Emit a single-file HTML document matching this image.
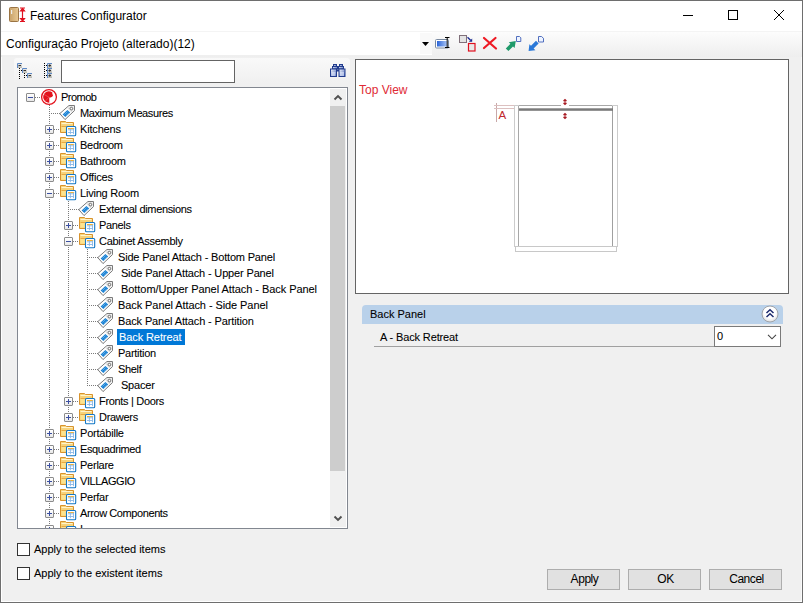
<!DOCTYPE html>
<html><head><meta charset="utf-8"><style>
*{box-sizing:border-box}
html,body{margin:0;padding:0}
body{width:803px;height:603px;overflow:hidden;position:relative;background:#f0f0f0;font-family:"Liberation Sans", sans-serif;color:#000}
.a{position:absolute}
.ic{position:absolute;overflow:visible}
#win{position:absolute;left:0;top:0;width:803px;height:603px;border:1px solid #6e6e6e;box-shadow:inset 1px 0 0 #fff, inset 0 -1px 0 #fff, inset -1px 0 0 #fafafa}
#title{position:absolute;left:1px;top:1px;width:801px;height:30px;background:#fff}
#tbar{position:absolute;left:1px;top:31px;width:801px;height:26px;background:linear-gradient(#fdfdfd,#eeeeee)}
.t12{position:absolute;font-size:12px;line-height:16px;white-space:pre}
.tt{position:absolute;font-size:11px;line-height:16px;white-space:pre;height:16px;-webkit-text-stroke:0.08px currentColor}
.sel{background:#0078d7;color:#fff;padding:0 4px 0 2px;margin-left:-1px}
#tree{position:absolute;left:17px;top:87px;width:331px;height:442px;border:1px solid #828790;background:#fff;overflow:hidden}
#treein{position:absolute;left:-18px;top:-88px;width:803px;height:603px}
.vdot{position:absolute;width:1px;background:repeating-linear-gradient(#7a7a7a 0 1px,transparent 1px 2px)}
.hdot{position:absolute;height:1px;background:repeating-linear-gradient(90deg,#7a7a7a 0 1px,transparent 1px 2px)}
.exp{position:absolute;width:9px;height:9px;border:1px solid #8c8c8c;border-radius:1px;background:linear-gradient(#fff,#e8e8e8)}
.hbar{position:absolute;width:5px;height:1px;background:#3b4fa0;margin-left:0}
.vbar{position:absolute;width:1px;height:5px;background:#3b4fa0}
#sb{position:absolute;left:312px;top:1px;width:16px;height:438px;background:#f0f0f0}
#thumb{position:absolute;left:0;top:17px;width:15px;height:365px;background:#cdcdcd}
.btn{position:absolute;top:569px;width:73px;height:21px;border:1px solid #adadad;background:#e1e1e1;font-size:12px;line-height:19px;text-align:center;padding-left:2px;letter-spacing:-0.45px}
.cb{position:absolute;width:13px;height:13px;border:1px solid #333;background:#fff}
#prev{position:absolute;left:355px;top:59px;width:434px;height:235px;border:1px solid #646464;background:#fff;overflow:hidden}
</style></head><body>
<div id="win"></div>
<div id="title"></div>
<svg class="ic" style="left:9px;top:7px" width="17" height="16" viewBox="0 0 17 16">
<defs><linearGradient id="cg" x1="0" x2="1"><stop offset="0" stop-color="#c9a26a"/><stop offset="1" stop-color="#e8c994"/></linearGradient></defs>
<rect x="0.5" y="0.5" width="9" height="14" rx="1" fill="url(#cg)" stroke="#9a7444"/>
<rect x="2" y="3" width="1.2" height="4" fill="#eee"/>
<path d="M11,1 L16,1 M13.5,1 L13.5,14.5 M11,14.5 L16,14.5 M11.5,4 L13.5,1.5 L15.5,4 Z M11.5,11.5 L13.5,14 L15.5,11.5 Z" stroke="#e0101e" stroke-width="1.2" fill="#e0101e"/>
</svg>
<div class="t12" style="left:30px;top:8px">Features Configurator</div>
<svg class="ic" style="left:683px;top:15px" width="10" height="1"><rect width="10" height="1" fill="#000"/></svg>
<svg class="ic" style="left:728px;top:10px" width="10" height="10"><rect x="0.5" y="0.5" width="9" height="9" fill="none" stroke="#000"/></svg>
<svg class="ic" style="left:774px;top:10px" width="10" height="10"><path d="M0,0 L10,10 M10,0 L0,10" stroke="#000" stroke-width="1"/></svg>
<div id="tbar"></div>
<div class="a" style="left:1px;top:31px;width:801px;height:1px;background:#f4f4f4"></div>
<div class="a" style="left:1px;top:32px;width:431px;height:23px;background:#fff"></div>
<div class="t12" style="left:6px;top:36px">Configuração Projeto (alterado)(12)</div>
<div class="a" style="left:420px;top:33px;width:12px;height:21px;background:#f9f9f9"></div>
<svg class="ic" style="left:422px;top:42px" width="7" height="4"><path d="M0,0 L7,0 L3.5,4 Z" fill="#000"/></svg>

<div class="a" style="left:14px;top:58px;width:336px;height:25px;background:linear-gradient(#f9f9f9,#f0f0f0);border-radius:3px"></div>
<div class="a" style="left:61px;top:60px;width:174px;height:23px;background:#fff;border:1px solid #646464"></div>

<div id="tree"><div id="treein">
<div class="vdot" style="left:49px;top:105px;height:425px"></div>
<div class="vdot" style="left:68px;top:201px;height:217px"></div>
<div class="vdot" style="left:87px;top:249px;height:137px"></div>
<div class="hdot" style="left:35px;top:97px;width:6px"></div>
<div class="exp" style="left:26px;top:93px"></div><div class="hbar" style="left:28px;top:97px"></div>
<svg class="ic" style="left:41px;top:89px" width="17" height="17" viewBox="0 0 17 17">
<circle cx="8" cy="8" r="7.4" fill="#fff" stroke="#e3121c" stroke-width="1.3"/>
<path d="M8.3,13.8 A5.8,5.8 0 0 1 7.6,2.2 L9.8,2.6 L11.4,3.6 L11.3,5 L12.1,6.2 L11.2,7.7 L9.6,8.5 L8.3,8.4 Z" fill="#e3121c"/>
<path d="M8,8.2 L3,5.4 M8,8.2 L4.5,11.9" stroke="#f07a80" stroke-width="0.5"/>
</svg>
<div class="tt" style="left:61px;top:89px;letter-spacing:-0.51px">Promob</div>
<div class="hdot" style="left:49px;top:113px;width:11px"></div>
<svg class="ic" style="left:58px;top:104px" width="18" height="18" viewBox="0 0 18 18">
<path d="M1.8,9.6 L11,1.5 L16.5,1.5 L16.5,6.6 L7,15.6 Z" fill="#fff" stroke="#7a7a7a" stroke-width="1" stroke-linejoin="round"/>
<path d="M11.4,2.3 L15.7,2.3 L15.7,6.3 L13.4,8.4 L9.6,4.2 Z" fill="#e2e2e2"/>
<path d="M4.6,10.4 L9.4,6 L12.2,8.6 L7.4,13 Z" fill="#1a80d2"/>
<path d="M6.3,10.6 L9.6,7.5 M7.8,11.8 L11,8.8" stroke="#7cc0f0" stroke-width="0.7"/>
<circle cx="13.4" cy="4.6" r="1.3" fill="#fff" stroke="#6a6a6a" stroke-width="1"/>
</svg>
<div class="tt" style="left:80px;top:105px;letter-spacing:-0.39px">Maximum Measures</div>
<div class="hdot" style="left:54px;top:129px;width:6px"></div>
<div class="exp" style="left:45px;top:125px"></div><div class="hbar" style="left:47px;top:129px"></div><div class="vbar" style="left:49px;top:127px"></div>
<svg class="ic" style="left:60px;top:121px" width="17" height="17" viewBox="0 0 17 17">
<path d="M0.5,0.5 L5.5,0.5 L6.5,1.5 L13.5,1.5 L13.5,11.5 L0.5,11.5 Z" fill="#f7d37a" stroke="#d8932c" stroke-width="1"/>
<path d="M1.5,2.5 L12.5,2.5" stroke="#fff4cc" stroke-width="1"/>
<path d="M1.5,6 L12.5,6 L12.5,10.5 L1.5,10.5 Z" fill="#fde38e"/>
<path d="M1.5,5.5 L12.5,5.5" stroke="#e6a844" stroke-width="1"/>
<rect x="6.5" y="5.5" width="9.2" height="9.2" rx="1" fill="#fff" stroke="#1478c6" stroke-width="1.1"/>
<path d="M8,7.6 L14.2,7.6" stroke="#f4a818" stroke-width="1"/>
<path d="M8,8.8 L14,8.8 M8,11.5 L14,11.5 M10.4,7.5 L10.4,13.2 M13.5,7.5 L13.5,13.2" stroke="#8ab8e6" stroke-width="0.9"/>
</svg>
<div class="tt" style="left:80px;top:121px;letter-spacing:-0.167px">Kitchens</div>
<div class="hdot" style="left:54px;top:145px;width:6px"></div>
<div class="exp" style="left:45px;top:141px"></div><div class="hbar" style="left:47px;top:145px"></div><div class="vbar" style="left:49px;top:143px"></div>
<svg class="ic" style="left:60px;top:137px" width="17" height="17" viewBox="0 0 17 17">
<path d="M0.5,0.5 L5.5,0.5 L6.5,1.5 L13.5,1.5 L13.5,11.5 L0.5,11.5 Z" fill="#f7d37a" stroke="#d8932c" stroke-width="1"/>
<path d="M1.5,2.5 L12.5,2.5" stroke="#fff4cc" stroke-width="1"/>
<path d="M1.5,6 L12.5,6 L12.5,10.5 L1.5,10.5 Z" fill="#fde38e"/>
<path d="M1.5,5.5 L12.5,5.5" stroke="#e6a844" stroke-width="1"/>
<rect x="6.5" y="5.5" width="9.2" height="9.2" rx="1" fill="#fff" stroke="#1478c6" stroke-width="1.1"/>
<path d="M8,7.6 L14.2,7.6" stroke="#f4a818" stroke-width="1"/>
<path d="M8,8.8 L14,8.8 M8,11.5 L14,11.5 M10.4,7.5 L10.4,13.2 M13.5,7.5 L13.5,13.2" stroke="#8ab8e6" stroke-width="0.9"/>
</svg>
<div class="tt" style="left:80px;top:137px;letter-spacing:-0.277px">Bedroom</div>
<div class="hdot" style="left:54px;top:161px;width:6px"></div>
<div class="exp" style="left:45px;top:157px"></div><div class="hbar" style="left:47px;top:161px"></div><div class="vbar" style="left:49px;top:159px"></div>
<svg class="ic" style="left:60px;top:153px" width="17" height="17" viewBox="0 0 17 17">
<path d="M0.5,0.5 L5.5,0.5 L6.5,1.5 L13.5,1.5 L13.5,11.5 L0.5,11.5 Z" fill="#f7d37a" stroke="#d8932c" stroke-width="1"/>
<path d="M1.5,2.5 L12.5,2.5" stroke="#fff4cc" stroke-width="1"/>
<path d="M1.5,6 L12.5,6 L12.5,10.5 L1.5,10.5 Z" fill="#fde38e"/>
<path d="M1.5,5.5 L12.5,5.5" stroke="#e6a844" stroke-width="1"/>
<rect x="6.5" y="5.5" width="9.2" height="9.2" rx="1" fill="#fff" stroke="#1478c6" stroke-width="1.1"/>
<path d="M8,7.6 L14.2,7.6" stroke="#f4a818" stroke-width="1"/>
<path d="M8,8.8 L14,8.8 M8,11.5 L14,11.5 M10.4,7.5 L10.4,13.2 M13.5,7.5 L13.5,13.2" stroke="#8ab8e6" stroke-width="0.9"/>
</svg>
<div class="tt" style="left:80px;top:153px;letter-spacing:-0.244px">Bathroom</div>
<div class="hdot" style="left:54px;top:177px;width:6px"></div>
<div class="exp" style="left:45px;top:173px"></div><div class="hbar" style="left:47px;top:177px"></div><div class="vbar" style="left:49px;top:175px"></div>
<svg class="ic" style="left:60px;top:169px" width="17" height="17" viewBox="0 0 17 17">
<path d="M0.5,0.5 L5.5,0.5 L6.5,1.5 L13.5,1.5 L13.5,11.5 L0.5,11.5 Z" fill="#f7d37a" stroke="#d8932c" stroke-width="1"/>
<path d="M1.5,2.5 L12.5,2.5" stroke="#fff4cc" stroke-width="1"/>
<path d="M1.5,6 L12.5,6 L12.5,10.5 L1.5,10.5 Z" fill="#fde38e"/>
<path d="M1.5,5.5 L12.5,5.5" stroke="#e6a844" stroke-width="1"/>
<rect x="6.5" y="5.5" width="9.2" height="9.2" rx="1" fill="#fff" stroke="#1478c6" stroke-width="1.1"/>
<path d="M8,7.6 L14.2,7.6" stroke="#f4a818" stroke-width="1"/>
<path d="M8,8.8 L14,8.8 M8,11.5 L14,11.5 M10.4,7.5 L10.4,13.2 M13.5,7.5 L13.5,13.2" stroke="#8ab8e6" stroke-width="0.9"/>
</svg>
<div class="tt" style="left:80px;top:169px;letter-spacing:-0.173px">Offices</div>
<div class="hdot" style="left:54px;top:193px;width:6px"></div>
<div class="exp" style="left:45px;top:189px"></div><div class="hbar" style="left:47px;top:193px"></div>
<svg class="ic" style="left:60px;top:185px" width="17" height="17" viewBox="0 0 17 17">
<path d="M0.5,0.5 L5.5,0.5 L6.5,1.5 L13.5,1.5 L13.5,11.5 L0.5,11.5 Z" fill="#f7d37a" stroke="#d8932c" stroke-width="1"/>
<path d="M1.5,2.5 L12.5,2.5" stroke="#fff4cc" stroke-width="1"/>
<path d="M1.5,6 L12.5,6 L12.5,10.5 L1.5,10.5 Z" fill="#fde38e"/>
<path d="M1.5,5.5 L12.5,5.5" stroke="#e6a844" stroke-width="1"/>
<rect x="6.5" y="5.5" width="9.2" height="9.2" rx="1" fill="#fff" stroke="#1478c6" stroke-width="1.1"/>
<path d="M8,7.6 L14.2,7.6" stroke="#f4a818" stroke-width="1"/>
<path d="M8,8.8 L14,8.8 M8,11.5 L14,11.5 M10.4,7.5 L10.4,13.2 M13.5,7.5 L13.5,13.2" stroke="#8ab8e6" stroke-width="0.9"/>
</svg>
<div class="tt" style="left:80px;top:185px;letter-spacing:-0.21px">Living Room</div>
<div class="hdot" style="left:68px;top:209px;width:11px"></div>
<svg class="ic" style="left:77px;top:200px" width="18" height="18" viewBox="0 0 18 18">
<path d="M1.8,9.6 L11,1.5 L16.5,1.5 L16.5,6.6 L7,15.6 Z" fill="#fff" stroke="#7a7a7a" stroke-width="1" stroke-linejoin="round"/>
<path d="M11.4,2.3 L15.7,2.3 L15.7,6.3 L13.4,8.4 L9.6,4.2 Z" fill="#e2e2e2"/>
<path d="M4.6,10.4 L9.4,6 L12.2,8.6 L7.4,13 Z" fill="#1a80d2"/>
<path d="M6.3,10.6 L9.6,7.5 M7.8,11.8 L11,8.8" stroke="#7cc0f0" stroke-width="0.7"/>
<circle cx="13.4" cy="4.6" r="1.3" fill="#fff" stroke="#6a6a6a" stroke-width="1"/>
</svg>
<div class="tt" style="left:99px;top:201px;letter-spacing:-0.334px">External dimensions</div>
<div class="hdot" style="left:73px;top:225px;width:6px"></div>
<div class="exp" style="left:64px;top:221px"></div><div class="hbar" style="left:66px;top:225px"></div><div class="vbar" style="left:68px;top:223px"></div>
<svg class="ic" style="left:79px;top:217px" width="17" height="17" viewBox="0 0 17 17">
<path d="M0.5,0.5 L5.5,0.5 L6.5,1.5 L13.5,1.5 L13.5,11.5 L0.5,11.5 Z" fill="#f7d37a" stroke="#d8932c" stroke-width="1"/>
<path d="M1.5,2.5 L12.5,2.5" stroke="#fff4cc" stroke-width="1"/>
<path d="M1.5,6 L12.5,6 L12.5,10.5 L1.5,10.5 Z" fill="#fde38e"/>
<path d="M1.5,5.5 L12.5,5.5" stroke="#e6a844" stroke-width="1"/>
<rect x="6.5" y="5.5" width="9.2" height="9.2" rx="1" fill="#fff" stroke="#1478c6" stroke-width="1.1"/>
<path d="M8,7.6 L14.2,7.6" stroke="#f4a818" stroke-width="1"/>
<path d="M8,8.8 L14,8.8 M8,11.5 L14,11.5 M10.4,7.5 L10.4,13.2 M13.5,7.5 L13.5,13.2" stroke="#8ab8e6" stroke-width="0.9"/>
</svg>
<div class="tt" style="left:99px;top:217px;letter-spacing:-0.33px">Panels</div>
<div class="hdot" style="left:73px;top:241px;width:6px"></div>
<div class="exp" style="left:64px;top:237px"></div><div class="hbar" style="left:66px;top:241px"></div>
<svg class="ic" style="left:79px;top:233px" width="17" height="17" viewBox="0 0 17 17">
<path d="M0.5,0.5 L5.5,0.5 L6.5,1.5 L13.5,1.5 L13.5,11.5 L0.5,11.5 Z" fill="#f7d37a" stroke="#d8932c" stroke-width="1"/>
<path d="M1.5,2.5 L12.5,2.5" stroke="#fff4cc" stroke-width="1"/>
<path d="M1.5,6 L12.5,6 L12.5,10.5 L1.5,10.5 Z" fill="#fde38e"/>
<path d="M1.5,5.5 L12.5,5.5" stroke="#e6a844" stroke-width="1"/>
<rect x="6.5" y="5.5" width="9.2" height="9.2" rx="1" fill="#fff" stroke="#1478c6" stroke-width="1.1"/>
<path d="M8,7.6 L14.2,7.6" stroke="#f4a818" stroke-width="1"/>
<path d="M8,8.8 L14,8.8 M8,11.5 L14,11.5 M10.4,7.5 L10.4,13.2 M13.5,7.5 L13.5,13.2" stroke="#8ab8e6" stroke-width="0.9"/>
</svg>
<div class="tt" style="left:99px;top:233px;letter-spacing:-0.273px">Cabinet Assembly</div>
<div class="hdot" style="left:87px;top:257px;width:11px"></div>
<svg class="ic" style="left:96px;top:248px" width="18" height="18" viewBox="0 0 18 18">
<path d="M1.8,9.6 L11,1.5 L16.5,1.5 L16.5,6.6 L7,15.6 Z" fill="#fff" stroke="#7a7a7a" stroke-width="1" stroke-linejoin="round"/>
<path d="M11.4,2.3 L15.7,2.3 L15.7,6.3 L13.4,8.4 L9.6,4.2 Z" fill="#e2e2e2"/>
<path d="M4.6,10.4 L9.4,6 L12.2,8.6 L7.4,13 Z" fill="#1a80d2"/>
<path d="M6.3,10.6 L9.6,7.5 M7.8,11.8 L11,8.8" stroke="#7cc0f0" stroke-width="0.7"/>
<circle cx="13.4" cy="4.6" r="1.3" fill="#fff" stroke="#6a6a6a" stroke-width="1"/>
</svg>
<div class="tt" style="left:118px;top:249px;letter-spacing:-0.178px">Side Panel Attach - Bottom Panel</div>
<div class="hdot" style="left:87px;top:273px;width:11px"></div>
<svg class="ic" style="left:96px;top:264px" width="18" height="18" viewBox="0 0 18 18">
<path d="M1.8,9.6 L11,1.5 L16.5,1.5 L16.5,6.6 L7,15.6 Z" fill="#fff" stroke="#7a7a7a" stroke-width="1" stroke-linejoin="round"/>
<path d="M11.4,2.3 L15.7,2.3 L15.7,6.3 L13.4,8.4 L9.6,4.2 Z" fill="#e2e2e2"/>
<path d="M4.6,10.4 L9.4,6 L12.2,8.6 L7.4,13 Z" fill="#1a80d2"/>
<path d="M6.3,10.6 L9.6,7.5 M7.8,11.8 L11,8.8" stroke="#7cc0f0" stroke-width="0.7"/>
<circle cx="13.4" cy="4.6" r="1.3" fill="#fff" stroke="#6a6a6a" stroke-width="1"/>
</svg>
<div class="tt" style="left:118px;top:265px;letter-spacing:-0.157px"> Side Panel Attach - Upper Panel</div>
<div class="hdot" style="left:87px;top:289px;width:11px"></div>
<svg class="ic" style="left:96px;top:280px" width="18" height="18" viewBox="0 0 18 18">
<path d="M1.8,9.6 L11,1.5 L16.5,1.5 L16.5,6.6 L7,15.6 Z" fill="#fff" stroke="#7a7a7a" stroke-width="1" stroke-linejoin="round"/>
<path d="M11.4,2.3 L15.7,2.3 L15.7,6.3 L13.4,8.4 L9.6,4.2 Z" fill="#e2e2e2"/>
<path d="M4.6,10.4 L9.4,6 L12.2,8.6 L7.4,13 Z" fill="#1a80d2"/>
<path d="M6.3,10.6 L9.6,7.5 M7.8,11.8 L11,8.8" stroke="#7cc0f0" stroke-width="0.7"/>
<circle cx="13.4" cy="4.6" r="1.3" fill="#fff" stroke="#6a6a6a" stroke-width="1"/>
</svg>
<div class="tt" style="left:118px;top:281px;letter-spacing:-0.056px"> Bottom/Upper Panel Attach - Back Panel</div>
<div class="hdot" style="left:87px;top:305px;width:11px"></div>
<svg class="ic" style="left:96px;top:296px" width="18" height="18" viewBox="0 0 18 18">
<path d="M1.8,9.6 L11,1.5 L16.5,1.5 L16.5,6.6 L7,15.6 Z" fill="#fff" stroke="#7a7a7a" stroke-width="1" stroke-linejoin="round"/>
<path d="M11.4,2.3 L15.7,2.3 L15.7,6.3 L13.4,8.4 L9.6,4.2 Z" fill="#e2e2e2"/>
<path d="M4.6,10.4 L9.4,6 L12.2,8.6 L7.4,13 Z" fill="#1a80d2"/>
<path d="M6.3,10.6 L9.6,7.5 M7.8,11.8 L11,8.8" stroke="#7cc0f0" stroke-width="0.7"/>
<circle cx="13.4" cy="4.6" r="1.3" fill="#fff" stroke="#6a6a6a" stroke-width="1"/>
</svg>
<div class="tt" style="left:118px;top:297px;letter-spacing:-0.081px">Back Panel Attach - Side Panel</div>
<div class="hdot" style="left:87px;top:321px;width:11px"></div>
<svg class="ic" style="left:96px;top:312px" width="18" height="18" viewBox="0 0 18 18">
<path d="M1.8,9.6 L11,1.5 L16.5,1.5 L16.5,6.6 L7,15.6 Z" fill="#fff" stroke="#7a7a7a" stroke-width="1" stroke-linejoin="round"/>
<path d="M11.4,2.3 L15.7,2.3 L15.7,6.3 L13.4,8.4 L9.6,4.2 Z" fill="#e2e2e2"/>
<path d="M4.6,10.4 L9.4,6 L12.2,8.6 L7.4,13 Z" fill="#1a80d2"/>
<path d="M6.3,10.6 L9.6,7.5 M7.8,11.8 L11,8.8" stroke="#7cc0f0" stroke-width="0.7"/>
<circle cx="13.4" cy="4.6" r="1.3" fill="#fff" stroke="#6a6a6a" stroke-width="1"/>
</svg>
<div class="tt" style="left:118px;top:313px;letter-spacing:-0.126px">Back Panel Attach - Partition</div>
<div class="hdot" style="left:87px;top:337px;width:11px"></div>
<svg class="ic" style="left:96px;top:328px" width="18" height="18" viewBox="0 0 18 18">
<path d="M1.8,9.6 L11,1.5 L16.5,1.5 L16.5,6.6 L7,15.6 Z" fill="#fff" stroke="#7a7a7a" stroke-width="1" stroke-linejoin="round"/>
<path d="M11.4,2.3 L15.7,2.3 L15.7,6.3 L13.4,8.4 L9.6,4.2 Z" fill="#e2e2e2"/>
<path d="M4.6,10.4 L9.4,6 L12.2,8.6 L7.4,13 Z" fill="#1a80d2"/>
<path d="M6.3,10.6 L9.6,7.5 M7.8,11.8 L11,8.8" stroke="#7cc0f0" stroke-width="0.7"/>
<circle cx="13.4" cy="4.6" r="1.3" fill="#fff" stroke="#6a6a6a" stroke-width="1"/>
</svg>
<div class="tt sel" style="left:118px;top:329px;letter-spacing:-0.099px">Back Retreat</div>
<div class="hdot" style="left:87px;top:353px;width:11px"></div>
<svg class="ic" style="left:96px;top:344px" width="18" height="18" viewBox="0 0 18 18">
<path d="M1.8,9.6 L11,1.5 L16.5,1.5 L16.5,6.6 L7,15.6 Z" fill="#fff" stroke="#7a7a7a" stroke-width="1" stroke-linejoin="round"/>
<path d="M11.4,2.3 L15.7,2.3 L15.7,6.3 L13.4,8.4 L9.6,4.2 Z" fill="#e2e2e2"/>
<path d="M4.6,10.4 L9.4,6 L12.2,8.6 L7.4,13 Z" fill="#1a80d2"/>
<path d="M6.3,10.6 L9.6,7.5 M7.8,11.8 L11,8.8" stroke="#7cc0f0" stroke-width="0.7"/>
<circle cx="13.4" cy="4.6" r="1.3" fill="#fff" stroke="#6a6a6a" stroke-width="1"/>
</svg>
<div class="tt" style="left:118px;top:345px;letter-spacing:-0.282px">Partition</div>
<div class="hdot" style="left:87px;top:369px;width:11px"></div>
<svg class="ic" style="left:96px;top:360px" width="18" height="18" viewBox="0 0 18 18">
<path d="M1.8,9.6 L11,1.5 L16.5,1.5 L16.5,6.6 L7,15.6 Z" fill="#fff" stroke="#7a7a7a" stroke-width="1" stroke-linejoin="round"/>
<path d="M11.4,2.3 L15.7,2.3 L15.7,6.3 L13.4,8.4 L9.6,4.2 Z" fill="#e2e2e2"/>
<path d="M4.6,10.4 L9.4,6 L12.2,8.6 L7.4,13 Z" fill="#1a80d2"/>
<path d="M6.3,10.6 L9.6,7.5 M7.8,11.8 L11,8.8" stroke="#7cc0f0" stroke-width="0.7"/>
<circle cx="13.4" cy="4.6" r="1.3" fill="#fff" stroke="#6a6a6a" stroke-width="1"/>
</svg>
<div class="tt" style="left:118px;top:361px;letter-spacing:-0.32px">Shelf</div>
<div class="hdot" style="left:87px;top:385px;width:11px"></div>
<svg class="ic" style="left:96px;top:376px" width="18" height="18" viewBox="0 0 18 18">
<path d="M1.8,9.6 L11,1.5 L16.5,1.5 L16.5,6.6 L7,15.6 Z" fill="#fff" stroke="#7a7a7a" stroke-width="1" stroke-linejoin="round"/>
<path d="M11.4,2.3 L15.7,2.3 L15.7,6.3 L13.4,8.4 L9.6,4.2 Z" fill="#e2e2e2"/>
<path d="M4.6,10.4 L9.4,6 L12.2,8.6 L7.4,13 Z" fill="#1a80d2"/>
<path d="M6.3,10.6 L9.6,7.5 M7.8,11.8 L11,8.8" stroke="#7cc0f0" stroke-width="0.7"/>
<circle cx="13.4" cy="4.6" r="1.3" fill="#fff" stroke="#6a6a6a" stroke-width="1"/>
</svg>
<div class="tt" style="left:118px;top:377px;letter-spacing:-0.17px"> Spacer</div>
<div class="hdot" style="left:73px;top:401px;width:6px"></div>
<div class="exp" style="left:64px;top:397px"></div><div class="hbar" style="left:66px;top:401px"></div><div class="vbar" style="left:68px;top:399px"></div>
<svg class="ic" style="left:79px;top:393px" width="17" height="17" viewBox="0 0 17 17">
<path d="M0.5,0.5 L5.5,0.5 L6.5,1.5 L13.5,1.5 L13.5,11.5 L0.5,11.5 Z" fill="#f7d37a" stroke="#d8932c" stroke-width="1"/>
<path d="M1.5,2.5 L12.5,2.5" stroke="#fff4cc" stroke-width="1"/>
<path d="M1.5,6 L12.5,6 L12.5,10.5 L1.5,10.5 Z" fill="#fde38e"/>
<path d="M1.5,5.5 L12.5,5.5" stroke="#e6a844" stroke-width="1"/>
<rect x="6.5" y="5.5" width="9.2" height="9.2" rx="1" fill="#fff" stroke="#1478c6" stroke-width="1.1"/>
<path d="M8,7.6 L14.2,7.6" stroke="#f4a818" stroke-width="1"/>
<path d="M8,8.8 L14,8.8 M8,11.5 L14,11.5 M10.4,7.5 L10.4,13.2 M13.5,7.5 L13.5,13.2" stroke="#8ab8e6" stroke-width="0.9"/>
</svg>
<div class="tt" style="left:99px;top:393px;letter-spacing:-0.319px">Fronts | Doors</div>
<div class="hdot" style="left:73px;top:417px;width:6px"></div>
<div class="exp" style="left:64px;top:413px"></div><div class="hbar" style="left:66px;top:417px"></div><div class="vbar" style="left:68px;top:415px"></div>
<svg class="ic" style="left:79px;top:409px" width="17" height="17" viewBox="0 0 17 17">
<path d="M0.5,0.5 L5.5,0.5 L6.5,1.5 L13.5,1.5 L13.5,11.5 L0.5,11.5 Z" fill="#f7d37a" stroke="#d8932c" stroke-width="1"/>
<path d="M1.5,2.5 L12.5,2.5" stroke="#fff4cc" stroke-width="1"/>
<path d="M1.5,6 L12.5,6 L12.5,10.5 L1.5,10.5 Z" fill="#fde38e"/>
<path d="M1.5,5.5 L12.5,5.5" stroke="#e6a844" stroke-width="1"/>
<rect x="6.5" y="5.5" width="9.2" height="9.2" rx="1" fill="#fff" stroke="#1478c6" stroke-width="1.1"/>
<path d="M8,7.6 L14.2,7.6" stroke="#f4a818" stroke-width="1"/>
<path d="M8,8.8 L14,8.8 M8,11.5 L14,11.5 M10.4,7.5 L10.4,13.2 M13.5,7.5 L13.5,13.2" stroke="#8ab8e6" stroke-width="0.9"/>
</svg>
<div class="tt" style="left:99px;top:409px;letter-spacing:-0.293px">Drawers</div>
<div class="hdot" style="left:54px;top:433px;width:6px"></div>
<div class="exp" style="left:45px;top:429px"></div><div class="hbar" style="left:47px;top:433px"></div><div class="vbar" style="left:49px;top:431px"></div>
<svg class="ic" style="left:60px;top:425px" width="17" height="17" viewBox="0 0 17 17">
<path d="M0.5,0.5 L5.5,0.5 L6.5,1.5 L13.5,1.5 L13.5,11.5 L0.5,11.5 Z" fill="#f7d37a" stroke="#d8932c" stroke-width="1"/>
<path d="M1.5,2.5 L12.5,2.5" stroke="#fff4cc" stroke-width="1"/>
<path d="M1.5,6 L12.5,6 L12.5,10.5 L1.5,10.5 Z" fill="#fde38e"/>
<path d="M1.5,5.5 L12.5,5.5" stroke="#e6a844" stroke-width="1"/>
<rect x="6.5" y="5.5" width="9.2" height="9.2" rx="1" fill="#fff" stroke="#1478c6" stroke-width="1.1"/>
<path d="M8,7.6 L14.2,7.6" stroke="#f4a818" stroke-width="1"/>
<path d="M8,8.8 L14,8.8 M8,11.5 L14,11.5 M10.4,7.5 L10.4,13.2 M13.5,7.5 L13.5,13.2" stroke="#8ab8e6" stroke-width="0.9"/>
</svg>
<div class="tt" style="left:80px;top:425px;letter-spacing:-0.208px">Portábille</div>
<div class="hdot" style="left:54px;top:449px;width:6px"></div>
<div class="exp" style="left:45px;top:445px"></div><div class="hbar" style="left:47px;top:449px"></div><div class="vbar" style="left:49px;top:447px"></div>
<svg class="ic" style="left:60px;top:441px" width="17" height="17" viewBox="0 0 17 17">
<path d="M0.5,0.5 L5.5,0.5 L6.5,1.5 L13.5,1.5 L13.5,11.5 L0.5,11.5 Z" fill="#f7d37a" stroke="#d8932c" stroke-width="1"/>
<path d="M1.5,2.5 L12.5,2.5" stroke="#fff4cc" stroke-width="1"/>
<path d="M1.5,6 L12.5,6 L12.5,10.5 L1.5,10.5 Z" fill="#fde38e"/>
<path d="M1.5,5.5 L12.5,5.5" stroke="#e6a844" stroke-width="1"/>
<rect x="6.5" y="5.5" width="9.2" height="9.2" rx="1" fill="#fff" stroke="#1478c6" stroke-width="1.1"/>
<path d="M8,7.6 L14.2,7.6" stroke="#f4a818" stroke-width="1"/>
<path d="M8,8.8 L14,8.8 M8,11.5 L14,11.5 M10.4,7.5 L10.4,13.2 M13.5,7.5 L13.5,13.2" stroke="#8ab8e6" stroke-width="0.9"/>
</svg>
<div class="tt" style="left:80px;top:441px;letter-spacing:-0.36px">Esquadrimed</div>
<div class="hdot" style="left:54px;top:465px;width:6px"></div>
<div class="exp" style="left:45px;top:461px"></div><div class="hbar" style="left:47px;top:465px"></div><div class="vbar" style="left:49px;top:463px"></div>
<svg class="ic" style="left:60px;top:457px" width="17" height="17" viewBox="0 0 17 17">
<path d="M0.5,0.5 L5.5,0.5 L6.5,1.5 L13.5,1.5 L13.5,11.5 L0.5,11.5 Z" fill="#f7d37a" stroke="#d8932c" stroke-width="1"/>
<path d="M1.5,2.5 L12.5,2.5" stroke="#fff4cc" stroke-width="1"/>
<path d="M1.5,6 L12.5,6 L12.5,10.5 L1.5,10.5 Z" fill="#fde38e"/>
<path d="M1.5,5.5 L12.5,5.5" stroke="#e6a844" stroke-width="1"/>
<rect x="6.5" y="5.5" width="9.2" height="9.2" rx="1" fill="#fff" stroke="#1478c6" stroke-width="1.1"/>
<path d="M8,7.6 L14.2,7.6" stroke="#f4a818" stroke-width="1"/>
<path d="M8,8.8 L14,8.8 M8,11.5 L14,11.5 M10.4,7.5 L10.4,13.2 M13.5,7.5 L13.5,13.2" stroke="#8ab8e6" stroke-width="0.9"/>
</svg>
<div class="tt" style="left:80px;top:457px;letter-spacing:-0.247px">Perlare</div>
<div class="hdot" style="left:54px;top:481px;width:6px"></div>
<div class="exp" style="left:45px;top:477px"></div><div class="hbar" style="left:47px;top:481px"></div><div class="vbar" style="left:49px;top:479px"></div>
<svg class="ic" style="left:60px;top:473px" width="17" height="17" viewBox="0 0 17 17">
<path d="M0.5,0.5 L5.5,0.5 L6.5,1.5 L13.5,1.5 L13.5,11.5 L0.5,11.5 Z" fill="#f7d37a" stroke="#d8932c" stroke-width="1"/>
<path d="M1.5,2.5 L12.5,2.5" stroke="#fff4cc" stroke-width="1"/>
<path d="M1.5,6 L12.5,6 L12.5,10.5 L1.5,10.5 Z" fill="#fde38e"/>
<path d="M1.5,5.5 L12.5,5.5" stroke="#e6a844" stroke-width="1"/>
<rect x="6.5" y="5.5" width="9.2" height="9.2" rx="1" fill="#fff" stroke="#1478c6" stroke-width="1.1"/>
<path d="M8,7.6 L14.2,7.6" stroke="#f4a818" stroke-width="1"/>
<path d="M8,8.8 L14,8.8 M8,11.5 L14,11.5 M10.4,7.5 L10.4,13.2 M13.5,7.5 L13.5,13.2" stroke="#8ab8e6" stroke-width="0.9"/>
</svg>
<div class="tt" style="left:80px;top:473px;letter-spacing:-0.412px">VILLAGGIO</div>
<div class="hdot" style="left:54px;top:497px;width:6px"></div>
<div class="exp" style="left:45px;top:493px"></div><div class="hbar" style="left:47px;top:497px"></div><div class="vbar" style="left:49px;top:495px"></div>
<svg class="ic" style="left:60px;top:489px" width="17" height="17" viewBox="0 0 17 17">
<path d="M0.5,0.5 L5.5,0.5 L6.5,1.5 L13.5,1.5 L13.5,11.5 L0.5,11.5 Z" fill="#f7d37a" stroke="#d8932c" stroke-width="1"/>
<path d="M1.5,2.5 L12.5,2.5" stroke="#fff4cc" stroke-width="1"/>
<path d="M1.5,6 L12.5,6 L12.5,10.5 L1.5,10.5 Z" fill="#fde38e"/>
<path d="M1.5,5.5 L12.5,5.5" stroke="#e6a844" stroke-width="1"/>
<rect x="6.5" y="5.5" width="9.2" height="9.2" rx="1" fill="#fff" stroke="#1478c6" stroke-width="1.1"/>
<path d="M8,7.6 L14.2,7.6" stroke="#f4a818" stroke-width="1"/>
<path d="M8,8.8 L14,8.8 M8,11.5 L14,11.5 M10.4,7.5 L10.4,13.2 M13.5,7.5 L13.5,13.2" stroke="#8ab8e6" stroke-width="0.9"/>
</svg>
<div class="tt" style="left:80px;top:489px;letter-spacing:-0.27px">Perfar</div>
<div class="hdot" style="left:54px;top:513px;width:6px"></div>
<div class="exp" style="left:45px;top:509px"></div><div class="hbar" style="left:47px;top:513px"></div><div class="vbar" style="left:49px;top:511px"></div>
<svg class="ic" style="left:60px;top:505px" width="17" height="17" viewBox="0 0 17 17">
<path d="M0.5,0.5 L5.5,0.5 L6.5,1.5 L13.5,1.5 L13.5,11.5 L0.5,11.5 Z" fill="#f7d37a" stroke="#d8932c" stroke-width="1"/>
<path d="M1.5,2.5 L12.5,2.5" stroke="#fff4cc" stroke-width="1"/>
<path d="M1.5,6 L12.5,6 L12.5,10.5 L1.5,10.5 Z" fill="#fde38e"/>
<path d="M1.5,5.5 L12.5,5.5" stroke="#e6a844" stroke-width="1"/>
<rect x="6.5" y="5.5" width="9.2" height="9.2" rx="1" fill="#fff" stroke="#1478c6" stroke-width="1.1"/>
<path d="M8,7.6 L14.2,7.6" stroke="#f4a818" stroke-width="1"/>
<path d="M8,8.8 L14,8.8 M8,11.5 L14,11.5 M10.4,7.5 L10.4,13.2 M13.5,7.5 L13.5,13.2" stroke="#8ab8e6" stroke-width="0.9"/>
</svg>
<div class="tt" style="left:80px;top:505px;letter-spacing:-0.41px">Arrow Components</div>
<div class="hdot" style="left:54px;top:529px;width:6px"></div>
<div class="exp" style="left:45px;top:525px"></div><div class="hbar" style="left:47px;top:529px"></div><div class="vbar" style="left:49px;top:527px"></div>
<svg class="ic" style="left:60px;top:521px" width="17" height="17" viewBox="0 0 17 17">
<path d="M0.5,0.5 L5.5,0.5 L6.5,1.5 L13.5,1.5 L13.5,11.5 L0.5,11.5 Z" fill="#f7d37a" stroke="#d8932c" stroke-width="1"/>
<path d="M1.5,2.5 L12.5,2.5" stroke="#fff4cc" stroke-width="1"/>
<path d="M1.5,6 L12.5,6 L12.5,10.5 L1.5,10.5 Z" fill="#fde38e"/>
<path d="M1.5,5.5 L12.5,5.5" stroke="#e6a844" stroke-width="1"/>
<rect x="6.5" y="5.5" width="9.2" height="9.2" rx="1" fill="#fff" stroke="#1478c6" stroke-width="1.1"/>
<path d="M8,7.6 L14.2,7.6" stroke="#f4a818" stroke-width="1"/>
<path d="M8,8.8 L14,8.8 M8,11.5 L14,11.5 M10.4,7.5 L10.4,13.2 M13.5,7.5 L13.5,13.2" stroke="#8ab8e6" stroke-width="0.9"/>
</svg>
<div class="tt" style="left:80px;top:521px;letter-spacing:-0.4px">I</div>
</div>
<div id="sb"><div id="thumb"></div></div>
</div>

<div id="prev">
<div class="t12" style="left:3px;top:22px;color:#e02a36">Top View</div>
<svg class="ic" style="left:0;top:0" width="434" height="235" viewBox="0 0 434 235">
<g transform="translate(-356,-60)">
<rect x="514.5" y="105.5" width="4" height="141" fill="#fff" stroke="#cccccc" stroke-width="1"/>
<path d="M518.5,106 V247" stroke="#a8a8a8"/>
<rect x="612.5" y="105.5" width="5" height="141" fill="#fff" stroke="#cccccc" stroke-width="1"/>
<path d="M612.5,106 V247" stroke="#a0a0a0"/>
<path d="M519,105.5 H561 M569,105.5 H612" stroke="#a8a8a8"/>
<rect x="519" y="108.3" width="94" height="2.5" fill="#7a7a7a"/>
<rect x="515.5" y="246.5" width="101" height="5" fill="#fff" stroke="#c8c8c8"/>
<path d="M496.5,103 V122" stroke="#c8a8a8"/>
<path d="M494,105.5 H514 M494,108.5 H514" stroke="#dcc0c0"/>
<text x="498.5" y="118.7" font-family="Liberation Sans" font-size="11.5" fill="#c0282e">A</text>
<path d="M565,99.5 V104.5 M563.5,101 L565,99.5 L566.5,101 M563.5,103 L565,104.5 L566.5,103" stroke="#a81c24" stroke-width="1.1" fill="none"/>
<path d="M565,113.5 V118.5 M563.5,115 L565,113.5 L566.5,115 M563.5,117 L565,118.5 L566.5,117" stroke="#a81c24" stroke-width="1.1" fill="none"/>
</g>
</svg>

</div>

<div class="a" style="left:362px;top:305px;width:421px;height:19px;background:#b9d1ea;border-radius:4px 4px 0 0"></div>
<div class="tt" style="left:370px;top:306px">Back Panel</div>
<div class="tt" style="left:380px;top:329px;letter-spacing:-0.13px">A - Back Retreat</div>
<div class="a" style="left:374px;top:346px;width:340px;height:1px;background:#a0a0a0"></div>
<div class="a" style="left:714px;top:326px;width:67px;height:21px;background:#fff;border:1px solid #7a7a7a"></div>
<div class="tt" style="left:717px;top:328px">0</div>

<div class="cb" style="left:17px;top:543px"></div>
<div class="tt" style="left:34px;top:541px">Apply to the selected items</div>
<div class="cb" style="left:17px;top:567px"></div>
<div class="tt" style="left:34px;top:565px">Apply to the existent items</div>

<div class="btn" style="left:547px">Apply</div>
<div class="btn" style="left:628px">OK</div>
<div class="btn" style="left:709px">Cancel</div>

<!-- tree toolbar icons -->
<svg class="ic" style="left:16px;top:62px" width="18" height="18" viewBox="0 0 18 18"><defs><linearGradient id="bxg" x1="0" y1="0" x2="0" y2="1"><stop offset="0" stop-color="#f4f4f4"/><stop offset="1" stop-color="#b8b8b0"/></linearGradient></defs><path d="M3.5,6 V17 M8.5,11 V16" stroke="#000" stroke-width="1" stroke-dasharray="1 1"/><rect x="5" y="8" width="1" height="1" fill="#000"/><rect x="10" y="13" width="1" height="1" fill="#000"/><rect x="1" y="1" width="5" height="5" fill="url(#bxg)"/><path d="M1.5,6 V1.5 H6" stroke="#5e88c4" stroke-width="1" fill="none"/><path d="M2.5,3.5 H5" stroke="#333" stroke-width="1"/><rect x="6" y="6" width="5" height="5" fill="url(#bxg)"/><path d="M6.5,11 V6.5 H11" stroke="#5e88c4" stroke-width="1" fill="none"/><path d="M7.5,8.5 H10" stroke="#333" stroke-width="1"/><rect x="11" y="11" width="5" height="5" fill="url(#bxg)"/><path d="M11.5,16 V11.5 H16" stroke="#5e88c4" stroke-width="1" fill="none"/><path d="M12.5,13.5 H15" stroke="#333" stroke-width="1"/></svg>
<svg class="ic" style="left:43px;top:62px" width="10" height="18" viewBox="0 0 10 18"><path d="M1.5,1 V17" stroke="#000" stroke-width="1" stroke-dasharray="1 1"/><rect x="3" y="3" width="1" height="1" fill="#000"/><rect x="3" y="8" width="1" height="1" fill="#000"/><rect x="3" y="13" width="1" height="1" fill="#000"/><rect x="4" y="1" width="5" height="5" fill="url(#bxg)"/><path d="M4.5,6 V1.5 H9" stroke="#5e88c4" stroke-width="1" fill="none"/><path d="M5.5,3.5 H8" stroke="#333" stroke-width="1"/><path d="M6.75,2.3 V4.8" stroke="#333" stroke-width="1"/><rect x="4" y="6" width="5" height="5" fill="url(#bxg)"/><path d="M4.5,11 V6.5 H9" stroke="#5e88c4" stroke-width="1" fill="none"/><path d="M5.5,8.5 H8" stroke="#333" stroke-width="1"/><path d="M6.75,7.3 V9.8" stroke="#333" stroke-width="1"/><rect x="4" y="11" width="5" height="5" fill="url(#bxg)"/><path d="M4.5,16 V11.5 H9" stroke="#5e88c4" stroke-width="1" fill="none"/><path d="M5.5,13.5 H8" stroke="#333" stroke-width="1"/><path d="M6.75,12.3 V14.8" stroke="#333" stroke-width="1"/></svg>
<!-- binoculars -->
<svg class="ic" style="left:330px;top:63px" width="16" height="15" viewBox="0 0 16 15">
<defs><linearGradient id="bng" x1="0" y1="0" x2="1" y2="1"><stop offset="0" stop-color="#ffffff"/><stop offset="1" stop-color="#3656b0"/></linearGradient></defs>
<g stroke="#223c8e" stroke-width="1" fill="url(#bng)">
<rect x="3.5" y="1.5" width="3" height="2"/>
<rect x="2.5" y="3.5" width="5" height="2.5"/>
<rect x="0.5" y="6" width="6" height="7.5"/>
<rect x="9.5" y="1.5" width="3" height="2"/>
<rect x="8.5" y="3.5" width="5" height="2.5"/>
<rect x="9" y="6" width="6" height="7.5"/>
</g>
<rect x="6.5" y="6.5" width="2.5" height="2" fill="#223c8e"/>
<rect x="1.5" y="9" width="4" height="4" fill="#e8eeff" opacity="0.6"/>
<rect x="10" y="9" width="4" height="4" fill="#e8eeff" opacity="0.6"/>
</svg>
<!-- main toolbar icons -->
<svg class="ic" style="left:435px;top:37px" width="17" height="12" viewBox="0 0 17 12">
<defs><linearGradient id="bg1" x1="0" x2="1"><stop offset="0" stop-color="#2a64d8"/><stop offset="1" stop-color="#a8c4f4"/></linearGradient></defs>
<rect x="0.5" y="2.5" width="13" height="8.5" rx="1" fill="#fff" stroke="#7a8aa0"/>
<rect x="2" y="4" width="10" height="5.5" fill="url(#bg1)"/>
<path d="M10,0.5 H14.5 M12.2,0.5 V10.5 M10,10.5 H14.5" stroke="#000" stroke-width="1"/>
</svg>
<svg class="ic" style="left:458px;top:34px" width="18" height="18" viewBox="0 0 18 18">
<rect x="1.5" y="1.5" width="7" height="7" fill="#e4e4e4" stroke="#80707a"/>
<rect x="10.5" y="9.5" width="6.5" height="7.5" fill="#e8e8e8" stroke="#e0101e" stroke-width="1.2"/>
<path d="M9.5,3.2 L12.6,6.3" stroke="#1a2a90" stroke-width="1.3"/>
<path d="M14.2,7.8 L14.2,4.4 L10.8,7.8 Z" fill="#1a2a90"/>
</svg>
<svg class="ic" style="left:483px;top:37px" width="14" height="12" viewBox="0 0 14 12">
<path d="M1,1 L13,11.5 M12.5,1 L1,11" stroke="#ee1a24" stroke-width="2.2" stroke-linecap="round"/>
</svg>
<svg class="ic" style="left:505px;top:35px" width="17" height="17" viewBox="0 0 17 17">
<path d="M0.8,13.4 L5.4,8.8 L3.8,7.2 L10.8,6 L9.6,13 L8,11.4 L3.4,16 Z" fill="#1f9a6a"/>
<path d="M11.5,1.5 H14.5 L15.8,2.8 V6.5 H11.5 Z" fill="#eef4ff" stroke="#4060b8" stroke-width="0.9"/>
</svg>
<svg class="ic" style="left:528px;top:35px" width="17" height="17" viewBox="0 0 17 17">
<path d="M0.6,16 L1.4,9.2 L3,10.8 L8,5.8 L10.6,8.4 L5.6,13.4 L7.4,15.2 Z" fill="#2a78d8"/>
<path d="M10.5,1.5 H13.5 L15.5,3.3 V7 H10.5 Z" fill="#eef4ff" stroke="#4060b8" stroke-width="0.9"/>
</svg>
<!-- scrollbar arrows -->
<svg class="ic" style="left:334px;top:95px" width="8" height="5" viewBox="0 0 8 5"><path d="M0.5,4.5 L4,1 L7.5,4.5" stroke="#505050" stroke-width="1.9" fill="none"/></svg>
<svg class="ic" style="left:334px;top:516px" width="8" height="5" viewBox="0 0 8 5"><path d="M0.5,0.5 L4,4 L7.5,0.5" stroke="#505050" stroke-width="1.9" fill="none"/></svg>
<!-- header circle button -->
<svg class="ic" style="left:761px;top:305px" width="18" height="18" viewBox="0 0 18 18">
<defs><radialGradient id="rg" cx="0.5" cy="0.4" r="0.6"><stop offset="0.6" stop-color="#fff"/><stop offset="1" stop-color="#dcdcdc"/></radialGradient></defs>
<circle cx="9" cy="9" r="8" fill="url(#rg)" stroke="#a0a4aa" stroke-width="1"/>
<path d="M5.5,8 L9,4.8 L12.5,8 M5.5,12 L9,8.8 L12.5,12" stroke="#1c2a6e" stroke-width="1.5" fill="none"/>
</svg>
<!-- dropdown chevron -->
<svg class="ic" style="left:767px;top:334px" width="10" height="7" viewBox="0 0 10 7"><path d="M1,0.8 L5,4.8 L9,0.8" stroke="#444" stroke-width="1.1" fill="none"/></svg>
</body></html>
